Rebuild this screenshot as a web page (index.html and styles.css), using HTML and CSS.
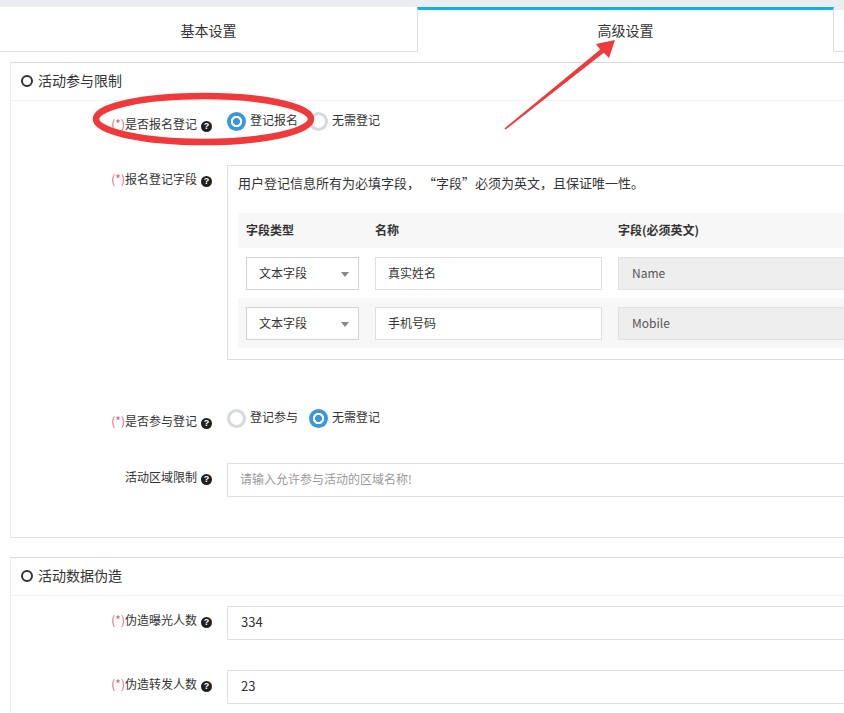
FILE: index.html
```html
<!DOCTYPE html>
<html lang="zh-CN">
<head>
<meta charset="utf-8">
<title>高级设置</title>
<link rel="stylesheet" href="styles.css">
</head>
<body>
<div class="page">
  <div class="tabs">
    <div class="tab">基本设置</div>
    <div class="tab active">高级设置</div>
    <div class="tab-fill"></div>
  </div>

  <div class="content">
    <section class="panel">
      <div class="panel-head"><span class="ring"></span>活动参与限制</div>
      <div class="panel-body body-1">
        <div class="row row-radio">
          <div class="lbl lbl-radio"><span class="req">(*)</span>是否报名登记<span class="help">?</span></div>
          <div class="ctrl radios">
            <span class="radio checked"></span><span class="rtext">登记报名</span>
            <span class="radio"></span><span class="rtext">无需登记</span>
          </div>
        </div>

        <div class="row row-fields">
          <div class="lbl"><span class="req">(*)</span>报名登记字段<span class="help">?</span></div>
          <div class="ctrl">
            <div class="fields-box">
              <p class="desc">用户登记信息所有为必填字段， “字段”必须为英文，且保证唯一性。</p>
              <div class="ftable">
                <div class="fcell fhead">字段类型</div>
                <div class="fcell fhead">名称</div>
                <div class="fcell fhead">字段(必须英文)</div>

                <div class="fcell"><div class="select">文本字段<span class="caret"></span></div></div>
                <div class="fcell"><div class="input name-input">真实姓名</div></div>
                <div class="fcell"><div class="input readonly">Name</div></div>

                <div class="fcell alt"><div class="select">文本字段<span class="caret"></span></div></div>
                <div class="fcell alt"><div class="input name-input">手机号码</div></div>
                <div class="fcell alt"><div class="input readonly">Mobile</div></div>
              </div>
            </div>
          </div>
        </div>

        <div class="row row-radio row-join">
          <div class="lbl lbl-radio"><span class="req">(*)</span>是否参与登记<span class="help">?</span></div>
          <div class="ctrl radios">
            <span class="radio"></span><span class="rtext">登记参与</span>
            <span class="radio checked"></span><span class="rtext">无需登记</span>
          </div>
        </div>

        <div class="row row-area">
          <div class="lbl">活动区域限制<span class="help">?</span></div>
          <div class="ctrl"><div class="input placeholder">请输入允许参与活动的区域名称!</div></div>
        </div>
      </div>
    </section>

    <section class="panel panel-2">
      <div class="panel-head"><span class="ring"></span>活动数据伪造</div>
      <div class="panel-body body-2">
        <div class="row">
          <div class="lbl"><span class="req">(*)</span>伪造曝光人数<span class="help">?</span></div>
          <div class="ctrl"><div class="input value">334</div></div>
        </div>
        <div class="row row-next">
          <div class="lbl"><span class="req">(*)</span>伪造转发人数<span class="help">?</span></div>
          <div class="ctrl"><div class="input value">23</div></div>
        </div>
      </div>
    </section>
  </div>

  <svg class="annot" width="844" height="713" viewBox="0 0 844 713" aria-hidden="true">
    <ellipse cx="203.5" cy="119" rx="107.5" ry="23" fill="none" stroke="#f0393b" stroke-width="6.5"/>
    <polygon fill="#f0393b" points="615,40 609,58 603.8,52.8 505.6,129.6 504.4,128.4 600.2,49.4 596,44"/>
  </svg>
</div>
</body>
</html>
```

FILE: styles.css
```css
* { box-sizing: border-box; }

html, body {
  margin: 0;
  padding: 0;
  overflow: hidden;
  background: #fff;
}

body {
  font-family: "Noto Sans CJK SC", "Noto Sans", sans-serif;
  font-size: 12px;
  color: #333;
}

.page {
  position: relative;
  width: 900px;
  height: 713px;
}

/* tabs */
.tabs {
  display: flex;
  background: #eaedf1;
  padding-top: 7px;
  height: 52px;
}

.tab {
  width: 417px;
  height: 45px;
  flex: none;
  background: #fff;
  border-top: 3px solid #fff;
  border-bottom: 1px solid #dcdfe3;
  text-align: center;
  font-size: 14px;
  line-height: 41px;
  color: #333;
}

.tab.active {
  border-top-color: #0cb4e8;
  border-left: 1px solid #dcdfe3;
  border-right: 1px solid #dcdfe3;
  border-bottom-color: #fff;
}

.tab-fill {
  flex: 1;
  height: 45px;
  background: #fff;
  border-top: 3px solid #eaedf1;
  border-bottom: 1px solid #dcdfe3;
}

/* panels */
.content {
  padding-top: 10px;
}

.panel {
  margin-left: 10px;
  border-top: 1px solid #d8d9e6;
  border-left: 1px solid #ececec;
  border-bottom: 1px solid #e4e4e4;
}

.panel-2 {
  margin-top: 19px;
}

.panel-head {
  height: 38px;
  display: flex;
  align-items: center;
  padding-left: 10px;
  padding-bottom: 3px;
  border-bottom: 1px solid #f1f1f1;
  font-size: 14px;
  color: #333;
}

.ring {
  width: 12px;
  height: 12px;
  border: 2px solid #333;
  border-radius: 50%;
  margin-right: 5px;
  margin-top: 2px;
  flex: none;
}

.body-1 {
  padding: 11px 0 40px;
}

.body-2 {
  padding: 10px 0 10px;
}

/* form rows */
.row {
  display: flex;
  align-items: flex-start;
  min-height: 34px;
}

.row-radio {
  min-height: 23px;
}

.row-fields { margin-top: 30px; }
.row-join { margin-top: 49px; }
.row-area { margin-top: 31px; }
.row-next { margin-top: 30px; }

.lbl {
  width: 201px;
  flex: none;
  text-align: right;
  font-size: 12px;
  line-height: 19px;
  padding-top: 4px;
  color: #333;
  white-space: nowrap;
}

.lbl-radio {
  padding-top: 2px;
}

.req {
  color: #e5606b;
}

.help {
  display: inline-block;
  width: 11px;
  height: 11px;
  margin-left: 4px;
  border-radius: 50%;
  background: #1f1f1f;
  color: #fff;
  font-family: "Liberation Sans", sans-serif;
  font-size: 9px;
  font-weight: bold;
  line-height: 11px;
  text-align: center;
  vertical-align: 0;
}

.ctrl {
  flex: 1;
  margin-left: 15px;
  min-width: 0;
}

/* radios */
.radios {
  display: flex;
  align-items: center;
  height: 19px;
}

.radio {
  width: 19px;
  height: 19px;
  border-radius: 50%;
  border: 3px solid #d6dadd;
  background: #fff;
  flex: none;
}

.radio.checked {
  border: none;
  background: radial-gradient(circle, #3a97de 0 3.2px, #fff 3.8px 5.4px, #3a97de 6px);
}

.rtext {
  margin-left: 4px;
  margin-right: 11px;
  margin-bottom: 4px;
  font-size: 12px;
  line-height: 19px;
  color: #333;
}

/* fields box */
.fields-box {
  border: 1px solid #dedede;
  border-right: none;
  padding: 7px 0 11px 10px;
}

.desc {
  margin: 0 0 20px;
  font-size: 13px;
  line-height: 20px;
  color: #333;
}

.ftable {
  display: grid;
  grid-template-columns: 129px 243px 1fr;
  grid-template-rows: 35px 50px 50px;
}

.fcell {
  padding: 9px 8px 0 8px;
  background: #fff;
}

.fcell.fhead {
  background: #f7f7f7;
  padding-top: 0;
  padding-bottom: 2px;
  font-weight: bold;
  font-size: 12px;
  line-height: 33px;
  color: #333;
}

.fcell.alt {
  background: #f7f7f7;
}

.select {
  position: relative;
  width: 113px;
  height: 33px;
  border: 1px solid #d3d3d3;
  background: #fff;
  padding-left: 12px;
  font-size: 12px;
  line-height: 29px;
  color: #333;
}

.caret {
  position: absolute;
  right: 9px;
  top: 14px;
  width: 0;
  height: 0;
  border-left: 4px solid transparent;
  border-right: 4px solid transparent;
  border-top: 5px solid #888;
}

.input {
  height: 34px;
  border: 1px solid #e0e0e0;
  background: #fff;
  padding-left: 12px;
  font-size: 12px;
  line-height: 30px;
  color: #333;
}

.name-input {
  width: 227px;
  height: 33px;
  line-height: 29px;
}

.readonly {
  height: 33px;
  line-height: 29px;
  background: #eeeeee;
  border-color: #e2e2e2;
  padding-left: 13px;
  color: #555;
}

.placeholder {
  color: #9a9a9a;
}

.value {
  font-size: 13px;
  padding-left: 13px;
  color: #333;
}

/* annotation overlay */
.annot {
  position: absolute;
  left: 0;
  top: 0;
  pointer-events: none;
}
```
